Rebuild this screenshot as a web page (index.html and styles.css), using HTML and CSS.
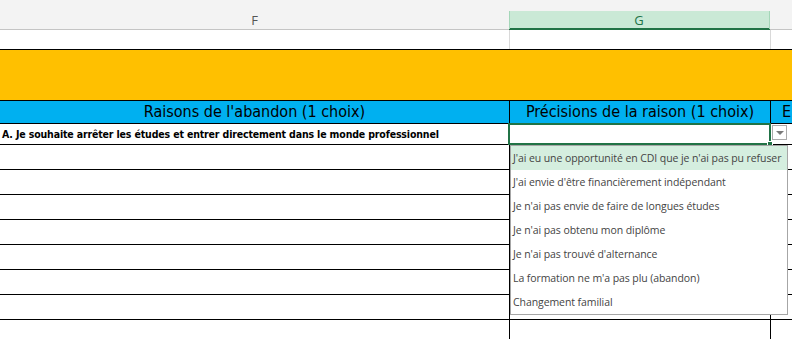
FILE: index.html
```html
<!DOCTYPE html>
<html lang="fr">
<head>
    <meta charset="UTF-8">
    <meta name="viewport" content="width=device-width, initial-scale=1.0">
    <title>Raisons de l'abandon</title>
    <link rel="stylesheet" href="styles.css">
</head>
<body>
    <div class="sheet">
        <div class="colbar">
            <div class="colhead">F</div>
            <div class="colhead active">G</div>
            <div class="colhead"></div>
        </div>

        <div class="row blank">
            <div class="cell"></div>
            <div class="cell"></div>
            <div class="cell"></div>
        </div>

        <div class="band"></div>

        <div class="row title">
            <div class="cell">Raisons de l'abandon (1 choix)</div>
            <div class="cell">Précisions de la raison (1 choix)</div>
            <div class="cell left">E</div>
        </div>

        <div class="row first">
            <div class="cell left">A. Je souhaite arrêter les études et entrer directement dans le monde professionnel</div>
            <div class="cell"></div>
            <div class="cell"></div>
        </div>

        <div class="row data"><div class="cell"></div><div class="cell"></div><div class="cell"></div></div>
        <div class="row data"><div class="cell"></div><div class="cell"></div><div class="cell"></div></div>
        <div class="row data"><div class="cell"></div><div class="cell"></div><div class="cell"></div></div>
        <div class="row data"><div class="cell"></div><div class="cell"></div><div class="cell"></div></div>
        <div class="row data"><div class="cell"></div><div class="cell"></div><div class="cell"></div></div>
        <div class="row data"><div class="cell"></div><div class="cell"></div><div class="cell"></div></div>
        <div class="row data"><div class="cell"></div><div class="cell"></div><div class="cell"></div></div>
        <div class="row data"><div class="cell"></div><div class="cell"></div><div class="cell"></div></div>

        <!-- active cell + validation list -->
        <div class="selection"></div>
        <div class="handle"></div>
        <div class="drop-btn"><span class="arrow"></span></div>
        <ul class="drop-list">
            <li class="hover">J'ai eu une opportunité en CDI que je n'ai pas pu refuser</li>
            <li>J'ai envie d'être financièrement indépendant</li>
            <li>Je n'ai pas envie de faire de longues études</li>
            <li>Je n'ai pas obtenu mon diplôme</li>
            <li>Je n'ai pas trouvé d'alternance</li>
            <li>La formation ne m'a pas plu (abandon)</li>
            <li>Changement familial</li>
        </ul>
    </div>
</body>
</html>
```

FILE: styles.css
```css
body {
    margin: 0;
    background-color: #fff;
}

.sheet {
    position: relative;
    width: 792px;
    height: 339px;
    overflow: hidden;
    font-family: "Liberation Sans Narrow", "DejaVu Sans Condensed", "Liberation Sans", sans-serif;
}

.colbar {
    display: grid;
    grid-template-columns: 509px 261px 1fr;
    align-items: end;
    height: 29px;
    background-color: #f3f3f3;
    border-bottom: 1px solid #c4c4c4;
}

.colhead {
    height: 18px;
    line-height: 18px;
    text-align: center;
    font-family: "Open Sans", sans-serif;
    font-size: 13px;
    color: #555;
}

.colhead.active {
    background-color: #cae9d6;
    color: #217346;
    border-right: 1px solid #a4d6b8;
    box-shadow: inset 1px 0 0 #a4d6b8, inset 0 -1px 0 #217346, 0 1px 0 #217346;
}

.row {
    display: grid;
    grid-template-columns: 510px 261px 1fr;
    border-bottom: 1px solid #000;
}

.cell {
    border-right: 1px solid #000;
    overflow: hidden;
    white-space: nowrap;
}

.cell:last-child {
    border-right: none;
}

.row.blank {
    height: 19px;
    border-bottom: none;
}

.row.blank .cell {
    border-right-color: #d9d9d9;
}

.band {
    height: 50px;
    background-color: #ffc000;
    border-top: 1px solid #000;
    border-bottom: 1px solid #000;
}

.row.title {
    height: 22px;
    background-color: #00b0f0;
}

.row.title .cell {
    text-align: center;
    font-size: 16px;
    line-height: 22px;
    color: #000;
}

.row.title .cell.left {
    text-align: left;
    padding-left: 11px;
}

.row.first {
    height: 20px;
}

.row.first .cell {
    font-size: 10.5px;
    font-weight: bold;
    letter-spacing: -0.15px;
    line-height: 21px;
    padding-left: 2px;
}

.row.data {
    height: 24px;
}

.selection {
    position: absolute;
    left: 508px;
    top: 123px;
    width: 263px;
    height: 22px;
    box-sizing: border-box;
    border: 2px solid #217346;
}

.handle {
    position: absolute;
    left: 767px;
    top: 141px;
    width: 4px;
    height: 4px;
    background-color: #217346;
    border: 1px solid #fff;
}

.drop-btn {
    position: absolute;
    left: 772px;
    top: 125px;
    width: 15px;
    height: 15px;
    box-sizing: border-box;
    border: 1px solid #ababab;
    background-color: #fff;
    display: flex;
    justify-content: center;
    align-items: center;
}

.arrow {
    width: 0;
    height: 0;
    border-left: 4px solid transparent;
    border-right: 4px solid transparent;
    border-top: 4px solid #7a7a7a;
}

.drop-list {
    position: absolute;
    left: 510px;
    top: 145px;
    width: 278px;
    height: 170px;
    box-sizing: border-box;
    margin: 0;
    padding: 0;
    list-style: none;
    background-color: #fff;
    border: 1px solid #a6a6a6;
    font-family: "Open Sans", sans-serif;
    font-size: 10.5px;
    letter-spacing: -0.08px;
    color: #444;
}

.drop-list li {
    height: 24px;
    line-height: 24px;
    padding-left: 2px;
    white-space: nowrap;
}

.drop-list li.hover {
    background-color: #d5eedf;
}
```
